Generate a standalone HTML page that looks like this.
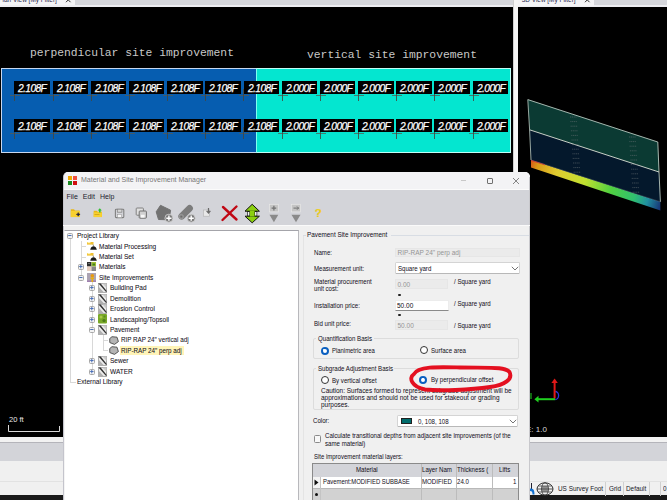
<!DOCTYPE html>
<html><head><meta charset="utf-8">
<style>
*{margin:0;padding:0;box-sizing:border-box}
html,body{width:667px;height:500px;overflow:hidden;background:#000;position:relative;font-family:"Liberation Sans",sans-serif}
.a{position:absolute}
.t{position:absolute;white-space:nowrap;line-height:1}
.mono{font-family:"Liberation Mono",monospace}
.lbl{position:absolute;background:#000;width:35.6px;height:13.2px}
.lbl span{position:absolute;left:4px;top:1px;color:#fff;font-style:italic;font-size:11px;letter-spacing:-0.65px;line-height:12px;-webkit-text-stroke:0.25px #fff;transform:scaleX(0.93);transform-origin:0 0}
.ch{position:absolute;width:11px;height:12px}
.ch:before{content:"";position:absolute;left:0.5px;top:6px;width:10px;height:1px;background:rgba(90,90,80,0.75)}
.ch:after{content:"";position:absolute;left:5px;top:0;width:1px;height:12px;background:rgba(70,70,62,0.85)}
.ui{color:#1c1c2c;font-size:6.5px}
.tx{color:#141022;-webkit-text-stroke:0.05px #141022;transform:scaleX(0.965);transform-origin:0 0}
</style></head><body>
<!-- top tab bar -->
<div class="a" style="left:0;top:0;width:667px;height:7px;background:#d6d7dc"></div>
<div class="a" style="left:0;top:0;width:75px;height:6px;background:#f4f4f6"></div>
<div class="a" style="left:0;top:5px;width:667px;height:2px;background:#eeeef2"></div>
<div class="a" style="left:518px;top:0;width:76px;height:6px;background:#f4f4f6"></div>
<div class="t" style="left:-1.7px;top:-2.8px;font-size:6.45px;color:#2a2a50">Plan View [My Filter]</div>
<svg class="a" style="left:65px;top:0" width="7" height="5" viewBox="0 0 7 5"><path d="M1 -2.5L5.5 2.2M5.5 -2.5L1 2.2" stroke="#303030" stroke-width="1"/></svg>
<div class="t" style="left:521.7px;top:-2.8px;font-size:6.45px;color:#2a2a50">3D View [My Filter]</div>
<svg class="a" style="left:584px;top:0" width="7" height="5" viewBox="0 0 7 5"><path d="M1 -2.5L5.5 2.2M5.5 -2.5L1 2.2" stroke="#303030" stroke-width="1"/></svg>
<!-- separator -->
<div class="a" style="left:513px;top:0;width:5px;height:437px;background:#f6f6f6;border-left:1px solid #d0d0d0"></div>

<!-- plan view labels -->
<div class="t mono" style="left:30px;top:48px;font-size:11.33px;color:#c8c8c8">perpendicular site improvement</div>
<div class="t mono" style="left:307px;top:50.3px;font-size:11.33px;color:#c8c8c8">vertical site improvement</div>

<!-- blue/cyan rect -->
<div class="a" style="left:1px;top:68px;width:255px;height:85px;background:#065db0;border:1px solid #c8d8f0;border-right:none"></div>
<div class="a" style="left:256px;top:68px;width:255px;height:85px;background:#04e6d0;border:1px solid #c0fff8;border-left:1px solid #80fff0"></div>

<div class="ch" style="left:9px;top:89px"></div><div class="ch" style="left:48px;top:89px"></div><div class="ch" style="left:86px;top:89px"></div><div class="ch" style="left:124px;top:89px"></div><div class="ch" style="left:162px;top:89px"></div><div class="ch" style="left:200px;top:89px"></div><div class="ch" style="left:238px;top:89px"></div><div class="ch" style="left:277px;top:89px"></div><div class="ch" style="left:315px;top:89px"></div><div class="ch" style="left:353px;top:89px"></div><div class="ch" style="left:391px;top:89px"></div><div class="ch" style="left:429px;top:89px"></div><div class="ch" style="left:468px;top:89px"></div><div class="ch" style="left:9px;top:127px"></div><div class="ch" style="left:48px;top:127px"></div><div class="ch" style="left:86px;top:127px"></div><div class="ch" style="left:124px;top:127px"></div><div class="ch" style="left:162px;top:127px"></div><div class="ch" style="left:200px;top:127px"></div><div class="ch" style="left:238px;top:127px"></div><div class="ch" style="left:277px;top:127px"></div><div class="ch" style="left:315px;top:127px"></div><div class="ch" style="left:353px;top:127px"></div><div class="ch" style="left:391px;top:127px"></div><div class="ch" style="left:429px;top:127px"></div><div class="ch" style="left:468px;top:127px"></div><div class="lbl" style="left:14.4px;top:81.3px"><span>2.108F</span></div><div class="lbl" style="left:52.6px;top:81.3px"><span>2.108F</span></div><div class="lbl" style="left:90.8px;top:81.3px"><span>2.108F</span></div><div class="lbl" style="left:128.9px;top:81.3px"><span>2.108F</span></div><div class="lbl" style="left:167.1px;top:81.3px"><span>2.108F</span></div><div class="lbl" style="left:205.3px;top:81.3px"><span>2.108F</span></div><div class="lbl" style="left:243.5px;top:81.3px"><span>2.108F</span></div><div class="lbl" style="left:281.7px;top:81.3px"><span>2.000F</span></div><div class="lbl" style="left:319.8px;top:81.3px"><span>2.000F</span></div><div class="lbl" style="left:358.0px;top:81.3px"><span>2.000F</span></div><div class="lbl" style="left:396.2px;top:81.3px"><span>2.000F</span></div><div class="lbl" style="left:434.4px;top:81.3px"><span>2.000F</span></div><div class="lbl" style="left:472.6px;top:81.3px"><span>2.000F</span></div><div class="lbl" style="left:14.4px;top:119.2px"><span>2.108F</span></div><div class="lbl" style="left:52.6px;top:119.2px"><span>2.108F</span></div><div class="lbl" style="left:90.8px;top:119.2px"><span>2.108F</span></div><div class="lbl" style="left:128.9px;top:119.2px"><span>2.108F</span></div><div class="lbl" style="left:167.1px;top:119.2px"><span>2.108F</span></div><div class="lbl" style="left:205.3px;top:119.2px"><span>2.108F</span></div><div class="lbl" style="left:243.5px;top:119.2px"><span>2.108F</span></div><div class="lbl" style="left:281.7px;top:119.2px"><span>2.000F</span></div><div class="lbl" style="left:319.8px;top:119.2px"><span>2.000F</span></div><div class="lbl" style="left:358.0px;top:119.2px"><span>2.000F</span></div><div class="lbl" style="left:396.2px;top:119.2px"><span>2.000F</span></div><div class="lbl" style="left:434.4px;top:119.2px"><span>2.000F</span></div><div class="lbl" style="left:472.6px;top:119.2px"><span>2.000F</span></div>

<!-- 3D view -->
<svg class="a" style="left:0;top:0" width="667" height="500" viewBox="0 0 667 500">
 <defs>
  <linearGradient id="rg" gradientUnits="userSpaceOnUse" x1="531" y1="164" x2="660" y2="206">
   <stop offset="0" stop-color="#d86018"/>
   <stop offset="0.05" stop-color="#d89a18"/>
   <stop offset="0.2" stop-color="#e0cc30"/>
   <stop offset="0.42" stop-color="#c0e030"/>
   <stop offset="0.62" stop-color="#50d040"/>
   <stop offset="0.8" stop-color="#30c070"/>
   <stop offset="0.9" stop-color="#2090a0"/>
   <stop offset="1" stop-color="#183878"/>
  </linearGradient>
 </defs>
 <polygon points="531,160 660.4,201.8 660.4,210.6 531,167.5" fill="url(#rg)"/>
 <polygon points="529.6,129.8 659,172 660.4,201.8 531,160" fill="#04182c"/>
 <line x1="531" y1="160.3" x2="545" y2="164.8" stroke="#e02020" stroke-width="0.9"/>
 <polygon points="527.8,99.6 657.8,142 659,172 529.6,129.8" fill="#0b3a33"/>
 <polyline points="527.8,99.6 657.8,142 659,172 660.4,201.8" fill="none" stroke="#b8c8c0" stroke-width="0.9"/>
 <polyline points="527.8,99.6 529.6,129.8 531,160" fill="none" stroke="#a8b8b0" stroke-width="0.9"/>
 <line x1="529.6" y1="129.8" x2="659" y2="172" stroke="#c8d0c8" stroke-width="1"/>
 <line x1="531" y1="160" x2="660.4" y2="201.8" stroke="#8090a0" stroke-width="0.6" opacity="0.6"/>
 <g stroke="#667074" stroke-width="0.55" stroke-dasharray="1.2 0.6"><line x1="570.0" y1="117.0" x2="577.0" y2="117.0"/><line x1="570.3" y1="121.6" x2="577.3" y2="121.6"/><line x1="570.6" y1="126.2" x2="577.6" y2="126.2"/><line x1="570.9" y1="130.8" x2="577.9" y2="130.8"/><line x1="571.2" y1="135.4" x2="578.2" y2="135.4"/><line x1="571.5" y1="140.0" x2="578.5" y2="140.0"/><line x1="571.8" y1="144.6" x2="578.8" y2="144.6"/><line x1="572.1" y1="149.2" x2="579.1" y2="149.2"/><line x1="572.4" y1="153.8" x2="579.4" y2="153.8"/><line x1="572.7" y1="158.4" x2="579.7" y2="158.4"/><line x1="573.0" y1="163.0" x2="580.0" y2="163.0"/><line x1="573.3" y1="167.6" x2="580.3" y2="167.6"/><line x1="573.6" y1="172.2" x2="580.6" y2="172.2"/><line x1="629.0" y1="137.0" x2="636.0" y2="137.0"/><line x1="629.3" y1="141.6" x2="636.3" y2="141.6"/><line x1="629.6" y1="146.2" x2="636.6" y2="146.2"/><line x1="629.9" y1="150.8" x2="636.9" y2="150.8"/><line x1="630.2" y1="155.4" x2="637.2" y2="155.4"/><line x1="630.5" y1="160.0" x2="637.5" y2="160.0"/><line x1="630.8" y1="164.6" x2="637.8" y2="164.6"/><line x1="631.1" y1="169.2" x2="638.1" y2="169.2"/><line x1="631.4" y1="173.8" x2="638.4" y2="173.8"/><line x1="631.7" y1="178.4" x2="638.7" y2="178.4"/><line x1="632.0" y1="183.0" x2="639.0" y2="183.0"/><line x1="632.3" y1="187.6" x2="639.3" y2="187.6"/><line x1="632.6" y1="192.2" x2="639.6" y2="192.2"/></g>
 <!-- axis -->
 <path d="M555.2 391.5 A3.2 3.8 0 0 1 555.2 399.6" fill="none" stroke="#2838e0" stroke-width="1.3"/>
 <line x1="554.6" y1="398.5" x2="554.6" y2="382" stroke="#e01818" stroke-width="2"/>
 <polygon points="551.4,383 557.8,383 554.6,378.6" fill="#e01818"/>
 <line x1="555" y1="399.2" x2="538" y2="399.2" stroke="#20d020" stroke-width="2"/>
 <polygon points="538.5,395.8 538.5,402.6 534.4,399.2" fill="#20d020"/>
 <line x1="531" y1="393" x2="531" y2="399" stroke="#20d020" stroke-width="1"/>
 <!-- scale bar -->
 <polyline points="8.5,425 8.5,431.5 59.5,431.5 59.5,426" fill="none" stroke="#d8d8d8" stroke-width="1"/>
</svg>
<div class="t" style="left:9px;top:416px;font-size:7.5px;color:#e8e8e8">20 ft</div>
<div class="t" style="left:526px;top:426px;font-size:8px;color:#d8d8d8">E: 1.0</div>
<!-- bottom bars -->
<div class="a" style="left:0;top:437px;width:667px;height:5px;background:#f2f2f2"></div>
<div class="a" style="left:0;top:442px;width:667px;height:19px;background:#d3d4d9;border-top:1px solid #b4b4ba"></div>
<div class="a" style="left:0;top:461px;width:667px;height:20px;background:#f0f0f0"></div>
<div class="a" style="left:0;top:481px;width:667px;height:1px;background:#e2e2e2"></div>
<div class="a" style="left:0;top:482px;width:667px;height:13px;background:#f0f0f0"></div>
<div class="a" style="left:0;top:495px;width:667px;height:5px;background:#1a1a1a"></div>
<!-- status bar items -->
<div class="a" style="left:530.5px;top:482.5px;width:1.6px;height:6px;background:#202030"></div><svg class="a" style="left:530px;top:488px" width="5" height="7" viewBox="0 0 5 7"><path d="M0 0.5h1.5C3.5 0.5 4.5 2.5 4.5 6.5H2.5C2.5 4 2 3 0 3z" fill="#1070d0"/></svg>
<svg class="a" style="left:536px;top:482px" width="18" height="14" viewBox="0 0 18 14"><ellipse cx="9" cy="7" rx="8" ry="6.2" fill="none" stroke="#303030" stroke-width="1"/><ellipse cx="9" cy="7" rx="3.5" ry="6.2" fill="none" stroke="#303030" stroke-width="0.8"/><line x1="1" y1="7" x2="17" y2="7" stroke="#303030" stroke-width="0.8"/><line x1="2" y1="4" x2="16" y2="4" stroke="#303030" stroke-width="0.7"/><line x1="2" y1="10" x2="16" y2="10" stroke="#303030" stroke-width="0.7"/><rect x="6" y="4" width="6" height="6" fill="#505050" opacity="0.6"/></svg>
<div class="t" style="left:558px;top:484.8px;font-size:7.2px;color:#181828;transform:scaleX(0.89);transform-origin:0 0">US Survey Foot</div>
<div class="a" style="left:605px;top:482px;width:1px;height:14px;background:#d0d0d0"></div>
<div class="t" style="left:609px;top:484.8px;font-size:7.2px;color:#181828;transform:scaleX(0.89);transform-origin:0 0">Grid</div>
<div class="a" style="left:623px;top:482px;width:1px;height:14px;background:#d0d0d0"></div>
<div class="t" style="left:626px;top:484.8px;font-size:7.2px;color:#181828;transform:scaleX(0.89);transform-origin:0 0">Default</div>
<div class="a" style="left:648.5px;top:482px;width:1px;height:14px;background:#d0d0d0"></div>
<div class="a" style="left:660px;top:482px;width:1px;height:14px;background:#d0d0d0"></div>
<div class="t" style="left:663px;top:484.8px;font-size:7.2px;color:#181828;transform:scaleX(0.89);transform-origin:0 0">0</div>
<!-- dialog -->
<div class="a" style="left:63px;top:172px;width:467px;height:328px;background:#f0f0f0;border-radius:5px 5px 0 0;overflow:hidden;border-left:1px solid #c4c4cc">
 <div class="a" style="left:0;top:0;width:467px;height:17.5px;background:#f3f3f5"></div>
 <div class="a" style="left:0;top:17.3px;width:467px;height:0.8px;background:#fbfbfb"></div><div class="a" style="left:0;top:18px;width:467px;height:34.8px;background:#d3d4d9"></div>
</div>
<div class="a" style="left:529.3px;top:177px;width:1px;height:323px;background:#c8c8cc"></div>
<!-- title -->
<div class="a" style="left:68px;top:176px;width:4px;height:4px;background:#f0a800"></div>
<div class="a" style="left:73px;top:176px;width:4px;height:4px;background:#f05040"></div>
<div class="a" style="left:68px;top:181px;width:4px;height:4px;background:#1a8a20"></div>
<div class="a" style="left:73px;top:181px;width:4px;height:4px;background:#d01010"></div>
<div class="t" style="left:80.7px;top:176.3px;font-size:7.5px;color:#767676;transform:scaleX(0.935);transform-origin:0 0">Material and Site Improvement Manager</div>
<div class="a" style="left:461px;top:180px;width:5px;height:1px;background:#c8c8c8"></div>
<div class="a" style="left:486.5px;top:177.5px;width:6.5px;height:6px;border:1px solid #707070;border-radius:1px"></div>
<svg class="a" style="left:512px;top:176.5px" width="8" height="8" viewBox="0 0 8 8"><path d="M1 1L7 7M7 1L1 7" stroke="#6a6a6a" stroke-width="0.8"/></svg>
<!-- menu -->
<div class="t ui" style="left:66.5px;top:192.5px;font-size:7px">File</div>
<div class="t ui" style="left:82.8px;top:192.5px;font-size:7px">Edit</div>
<div class="t ui" style="left:100px;top:192.5px;font-size:7px">Help</div>
<!-- toolbar -->
<svg class="a" style="left:0;top:0" width="340" height="230" viewBox="0 0 340 230">
 <!-- 1 folder star -->
 <path d="M70.8 209.2h3.2l1 1.2h4.6v6.7h-8.8z" fill="#e8b818"/>
 <path d="M70.8 211h9.1v6.1h-9.1z" fill="#f8d030"/>
 <path d="M78.2 212.6l0.6 1.3 1.3 0.5-1.3 0.5-0.6 1.3-0.6-1.3-1.3-0.5 1.3-0.5z" fill="#202040" stroke="#202040" stroke-width="0.6"/>
 <!-- 2 folder green arrow -->
 <path d="M93.7 210.8h3l1 1h4.2v5.3h-8.2z" fill="#e8b818"/>
 <path d="M93.7 212.4h8.2v4.7h-8.2z" fill="#f8d030"/>
 <path d="M94.5 214.5h5" stroke="#c09010" stroke-width="0.6"/>
 <path d="M99.8 208.3l2 2.2h-1.2v2h-1.6v-2h-1.2z" fill="#30c030"/>
 <!-- 3 floppy -->
 <rect x="115.4" y="209.2" width="8.4" height="8.4" rx="0.8" fill="none" stroke="#808080" stroke-width="1.1"/>
 <rect x="117.3" y="209.2" width="4.6" height="3" fill="#d8d8d8" stroke="#808080" stroke-width="0.7"/>
 <rect x="117.6" y="214.4" width="4" height="3.2" fill="#f8f8f8" stroke="#909090" stroke-width="0.5"/>
 <!-- 4 double floppy -->
 <rect x="136.2" y="208" width="7.2" height="7.2" rx="0.8" fill="#e0e0e0" stroke="#808080" stroke-width="1"/>
 <rect x="139.2" y="211" width="7.2" height="7.2" rx="0.8" fill="#d0d0d0" stroke="#707070" stroke-width="1"/>
 <rect x="141" y="214.8" width="3.6" height="2.8" fill="#f8f8f8"/>
 <!-- 5 hexagon plus -->
 <polygon points="160.5,205.3 170.6,210.2 169,219.8 158.5,219.5 156.2,211.8" fill="#727272" stroke="#727272" stroke-width="1" stroke-linejoin="round"/>
 <circle cx="168.9" cy="218.2" r="4" fill="#7a7a7a" stroke="#d8d8d8" stroke-width="0.8"/>
 <path d="M166.3 218.2h5.2M168.9 215.6v5.2" stroke="#fff" stroke-width="1.4"/>
 <!-- 6 pipe plus -->
 <line x1="181.6" y1="216.3" x2="189.6" y2="208.3" stroke="#7c7c7c" stroke-width="6.6" stroke-linecap="round"/>
 <circle cx="181.3" cy="216.6" r="2.2" fill="#8a8a8a" stroke="#a0a0a0" stroke-width="0.7"/>
 <circle cx="181.3" cy="216.6" r="0.9" fill="#6a6a6a"/>
 <circle cx="191.2" cy="218.2" r="4" fill="#7a7a7a" stroke="#d8d8d8" stroke-width="0.8"/>
 <path d="M188.6 218.2h5.2M191.2 215.6v5.2" stroke="#fff" stroke-width="1.4"/>
 <!-- 7 doc arrow -->
 <rect x="203.3" y="210" width="6" height="6.2" fill="#e8e8e8" stroke="#b0b0b0" stroke-width="0.6"/>
 <path d="M208.5 208v4.5M206.6 210.8l1.9 2.2 1.9-2.2" fill="none" stroke="#6a6a6a" stroke-width="1.2"/>
 <!-- 8 red X -->
 <path d="M223 207L236.5 219.5M236.5 206.5L222.5 220" stroke="#c00814" stroke-width="2.4" stroke-linecap="round"/>
 <!-- 9 green double arrow -->
 <rect x="247.2" y="210.8" width="10" height="6.2" fill="#101010"/>
 <rect x="247.8" y="212" width="1.6" height="3.8" fill="#f0f0f0"/>
 <rect x="255" y="212" width="1.6" height="3.8" fill="#f0f0f0"/>
 <path d="M252.2 204.3L259.4 211.2H245z" fill="#8cd010" stroke="#101010" stroke-width="1" stroke-linejoin="round"/>
 <path d="M252.2 222.8L259.4 216.2H245z" fill="#8cd010" stroke="#101010" stroke-width="1" stroke-linejoin="round"/>
 <rect x="249.8" y="210.6" width="4.8" height="6" fill="#8cd010"/>
 <!-- 10 -->
 <rect x="269.5" y="204.3" width="8.8" height="7.6" fill="#c4c4c4" stroke="#e8e8e8" stroke-width="0.7"/>
 <path d="M273.9 205.8v4.6M271.6 208.1h4.6" stroke="#707070" stroke-width="1.2"/>
 <polygon points="269.5,214.8 278.3,214.8 273.9,222.3" fill="#8a8a8a"/>
 <!-- 11 -->
 <rect x="291.3" y="204.3" width="9.2" height="7.6" fill="#c4c4c4" stroke="#e8e8e8" stroke-width="0.7"/>
 <path d="M293.5 208.1h5M297 206.5l1.6 1.6-1.6 1.6" fill="none" stroke="#707070" stroke-width="1"/>
 <polygon points="291.5,214.8 300.5,214.8 296,222.3" fill="#8a8a8a"/>
</svg>
<div class="t" style="left:314.8px;top:207.5px;font-size:11.5px;font-weight:bold;color:#f2d020;-webkit-text-stroke:0.15px #d0a800">?</div>
<div class="a" style="left:63px;top:224.8px;width:467px;height:1px;background:#fafafa"></div>

<!-- tree -->
<div class="a" style="left:64px;top:230px;width:235px;height:270px;background:#fff;border:1px solid #a4a4aa;border-left-color:#f4f4f4;border-right-color:#b8b8bc;border-bottom:none"></div>
<div class="a" style="left:69.5px;top:239.2px;width:1px;height:143.0px;background:#d8d8d8"></div><div class="a" style="left:81.0px;top:240.7px;width:1px;height:36.7px;background:#d8d8d8"></div><div class="a" style="left:92.0px;top:280.4px;width:1px;height:91.4px;background:#d8d8d8"></div><div class="a" style="left:103.0px;top:334.6px;width:1px;height:16.4px;background:#d8d8d8"></div><div class="a" style="left:81.0px;top:246.1px;width:5.0px;height:1px;background:#d8d8d8"></div><div class="a" style="left:81.0px;top:256.6px;width:5.0px;height:1px;background:#d8d8d8"></div><div class="a" style="left:103.0px;top:340.0px;width:5.0px;height:1px;background:#d8d8d8"></div><div class="a" style="left:103.0px;top:350.4px;width:5.0px;height:1px;background:#d8d8d8"></div><div class="a" style="left:70.0px;top:381.7px;width:6.0px;height:1px;background:#d8d8d8"></div><svg class="a" style="left:67px;top:233px" width="6" height="6" viewBox="0 0 6 6"><rect x="0.5" y="0.5" width="5" height="5" rx="1" fill="#f2f2f2" stroke="#a8a8a8" stroke-width="1"/><path d="M1.2 2.5h3.3" stroke="#4a70b8" stroke-width="1"/></svg><div class="t tx" style="left:76.9px;top:233.1px;font-size:6.75px">Project Library</div><svg class="a" style="left:87px;top:241.3px" width="10" height="10" viewBox="0 0 10 10"><rect x="0" y="1" width="6.5" height="2.6" fill="#f0c030"/><rect x="0.5" y="1" width="3" height="1.2" fill="#fff4b0"/><line x1="6" y1="3.4" x2="6.8" y2="5.5" stroke="#505050" stroke-width="0.6"/><path d="M3.2 8.8 C3.8 5.8 5.2 5.2 6.5 5.2 C7.8 5.2 9.2 5.8 9.8 8.8Z" fill="#1a1a1a"/></svg><div class="t tx" style="left:98.6px;top:243.5px;font-size:6.75px">Material Processing</div><svg class="a" style="left:87px;top:251.8px" width="10" height="10" viewBox="0 0 10 10"><rect x="0" y="1" width="6.5" height="2.6" fill="#f0c030"/><rect x="0.5" y="1" width="3" height="1.2" fill="#fff4b0"/><line x1="6" y1="3.4" x2="6.8" y2="5.5" stroke="#505050" stroke-width="0.6"/><path d="M3.2 8.8 C3.8 5.8 5.2 5.2 6.5 5.2 C7.8 5.2 9.2 5.8 9.8 8.8Z" fill="#1a1a1a"/></svg><div class="t tx" style="left:98.6px;top:254.0px;font-size:6.75px">Material Set</div><svg class="a" style="left:78px;top:264px" width="6" height="6" viewBox="0 0 6 6"><rect x="0.5" y="0.5" width="5" height="5" rx="1" fill="#f2f2f2" stroke="#a8a8a8" stroke-width="1"/><path d="M1.2 2.5h3.3" stroke="#4a70b8" stroke-width="1"/><path d="M2.8 1v3.3" stroke="#4a70b8" stroke-width="1"/></svg><svg class="a" style="left:87px;top:262.2px" width="10" height="10" viewBox="0 0 10 10"><rect x="0" y="0" width="4.5" height="4.5" fill="#303030"/><rect x="4.5" y="0" width="4.5" height="4.5" fill="#a0c030"/><rect x="5.5" y="1.5" width="2.5" height="2" fill="#408020"/><rect x="0" y="4.5" width="4.5" height="4.5" fill="#e8d0c0"/><rect x="4.5" y="4.5" width="4.5" height="4.5" fill="#888"/><rect x="1" y="1" width="2" height="1" fill="#707070"/></svg><div class="t tx" style="left:98.6px;top:264.4px;font-size:6.75px">Materials</div><svg class="a" style="left:78px;top:275px" width="6" height="6" viewBox="0 0 6 6"><rect x="0.5" y="0.5" width="5" height="5" rx="1" fill="#f2f2f2" stroke="#a8a8a8" stroke-width="1"/><path d="M1.2 2.5h3.3" stroke="#4a70b8" stroke-width="1"/></svg><svg class="a" style="left:87px;top:272.6px" width="10" height="10" viewBox="0 0 10 10"><rect x="0" y="0" width="9" height="9" fill="#aca4b4"/><rect x="0" y="7.5" width="9" height="1.5" fill="#a080b0"/><circle cx="5.3" cy="2.8" r="1.8" fill="#e89a10"/><path d="M3.5 4.5h3.6v1.5h-1v3h-1.6v-3h-1z" fill="#e8b010"/></svg><div class="t tx" style="left:98.6px;top:274.8px;font-size:6.75px">Site Improvements</div><svg class="a" style="left:89px;top:285px" width="6" height="6" viewBox="0 0 6 6"><rect x="0.5" y="0.5" width="5" height="5" rx="1" fill="#f2f2f2" stroke="#a8a8a8" stroke-width="1"/><path d="M1.2 2.5h3.3" stroke="#4a70b8" stroke-width="1"/><path d="M2.8 1v3.3" stroke="#4a70b8" stroke-width="1"/></svg><svg class="a" style="left:98px;top:283.0px" width="9" height="10" viewBox="0 0 9 10"><rect x="0.4" y="0.4" width="8.2" height="9.2" fill="#ececec" stroke="#909090" stroke-width="0.7"/><path d="M0.5 0.5h2.2L8.5 7.8v1.8z" fill="#303030"/><path d="M4.5 0.5h4v4.5z" fill="#c8c8c8"/><path d="M0.5 3.5L6 9.5H0.5z" fill="#b0b0b0"/></svg><div class="t tx" style="left:109.8px;top:285.2px;font-size:6.75px">Building Pad</div><svg class="a" style="left:89px;top:296px" width="6" height="6" viewBox="0 0 6 6"><rect x="0.5" y="0.5" width="5" height="5" rx="1" fill="#f2f2f2" stroke="#a8a8a8" stroke-width="1"/><path d="M1.2 2.5h3.3" stroke="#4a70b8" stroke-width="1"/><path d="M2.8 1v3.3" stroke="#4a70b8" stroke-width="1"/></svg><svg class="a" style="left:98px;top:293.5px" width="9" height="10" viewBox="0 0 9 10"><rect x="0.4" y="0.4" width="8.2" height="9.2" fill="#ececec" stroke="#909090" stroke-width="0.7"/><path d="M0.5 0.5h2.2L8.5 7.8v1.8z" fill="#303030"/><path d="M4.5 0.5h4v4.5z" fill="#c8c8c8"/><path d="M0.5 3.5L6 9.5H0.5z" fill="#b0b0b0"/></svg><div class="t tx" style="left:109.8px;top:295.7px;font-size:6.75px">Demolition</div><svg class="a" style="left:89px;top:306px" width="6" height="6" viewBox="0 0 6 6"><rect x="0.5" y="0.5" width="5" height="5" rx="1" fill="#f2f2f2" stroke="#a8a8a8" stroke-width="1"/><path d="M1.2 2.5h3.3" stroke="#4a70b8" stroke-width="1"/><path d="M2.8 1v3.3" stroke="#4a70b8" stroke-width="1"/></svg><svg class="a" style="left:98px;top:303.9px" width="9" height="10" viewBox="0 0 9 10"><rect x="0.4" y="0.4" width="8.2" height="9.2" fill="#ececec" stroke="#909090" stroke-width="0.7"/><path d="M0.5 0.5h2.2L8.5 7.8v1.8z" fill="#303030"/><path d="M4.5 0.5h4v4.5z" fill="#c8c8c8"/><path d="M0.5 3.5L6 9.5H0.5z" fill="#b0b0b0"/></svg><div class="t tx" style="left:109.8px;top:306.1px;font-size:6.75px">Erosion Control</div><svg class="a" style="left:89px;top:317px" width="6" height="6" viewBox="0 0 6 6"><rect x="0.5" y="0.5" width="5" height="5" rx="1" fill="#f2f2f2" stroke="#a8a8a8" stroke-width="1"/><path d="M1.2 2.5h3.3" stroke="#4a70b8" stroke-width="1"/><path d="M2.8 1v3.3" stroke="#4a70b8" stroke-width="1"/></svg><svg class="a" style="left:98px;top:314.3px" width="9" height="10" viewBox="0 0 9 10"><rect x="0" y="0" width="9" height="9.5" rx="1" fill="#78a828"/><circle cx="3" cy="3" r="1.5" fill="#a8c848"/><circle cx="6" cy="6.5" r="1.6" fill="#4a7a18"/><circle cx="6.5" cy="2.5" r="1" fill="#5a8a20"/></svg><div class="t tx" style="left:109.8px;top:316.5px;font-size:6.75px">Landscaping/Topsoil</div><svg class="a" style="left:89px;top:327px" width="6" height="6" viewBox="0 0 6 6"><rect x="0.5" y="0.5" width="5" height="5" rx="1" fill="#f2f2f2" stroke="#a8a8a8" stroke-width="1"/><path d="M1.2 2.5h3.3" stroke="#4a70b8" stroke-width="1"/></svg><svg class="a" style="left:98px;top:324.8px" width="9" height="10" viewBox="0 0 9 10"><rect x="0.4" y="0.4" width="8.2" height="9.2" fill="#ececec" stroke="#909090" stroke-width="0.7"/><path d="M0.5 0.5h2.2L8.5 7.8v1.8z" fill="#303030"/><path d="M4.5 0.5h4v4.5z" fill="#c8c8c8"/><path d="M0.5 3.5L6 9.5H0.5z" fill="#b0b0b0"/></svg><div class="t tx" style="left:109.8px;top:327.0px;font-size:6.75px">Pavement</div><svg class="a" style="left:108.6px;top:335.8px" width="10" height="9" viewBox="0 0 10 9"><polygon points="3,0.7 8,1.2 9.4,5.6 5.5,8.4 0.8,6.6 0.7,2.6" fill="#b4b4b4" stroke="#484848" stroke-width="0.9"/></svg><div class="t tx" style="left:120.8px;top:337.4px;font-size:6.5px">RIP RAP 24&quot; vertical adj</div><svg class="a" style="left:108.6px;top:346.2px" width="10" height="9" viewBox="0 0 10 9"><polygon points="3,0.7 8,1.2 9.4,5.6 5.5,8.4 0.8,6.6 0.7,2.6" fill="#b4b4b4" stroke="#484848" stroke-width="0.9"/></svg><div class="a" style="left:119.8px;top:346.1px;width:64px;height:9.2px;background:#fff4b8"></div><div class="t tx" style="left:120.8px;top:347.8px;font-size:6.5px">RIP-RAP 24&quot; perp adj</div><svg class="a" style="left:89px;top:358px" width="6" height="6" viewBox="0 0 6 6"><rect x="0.5" y="0.5" width="5" height="5" rx="1" fill="#f2f2f2" stroke="#a8a8a8" stroke-width="1"/><path d="M1.2 2.5h3.3" stroke="#4a70b8" stroke-width="1"/><path d="M2.8 1v3.3" stroke="#4a70b8" stroke-width="1"/></svg><svg class="a" style="left:98px;top:356.1px" width="9" height="10" viewBox="0 0 9 10"><rect x="0.4" y="0.4" width="8.2" height="9.2" fill="#ececec" stroke="#909090" stroke-width="0.7"/><path d="M0.5 0.5h2.2L8.5 7.8v1.8z" fill="#303030"/><path d="M4.5 0.5h4v4.5z" fill="#c8c8c8"/><path d="M0.5 3.5L6 9.5H0.5z" fill="#b0b0b0"/></svg><div class="t tx" style="left:109.8px;top:358.3px;font-size:6.75px">Sewer</div><svg class="a" style="left:89px;top:369px" width="6" height="6" viewBox="0 0 6 6"><rect x="0.5" y="0.5" width="5" height="5" rx="1" fill="#f2f2f2" stroke="#a8a8a8" stroke-width="1"/><path d="M1.2 2.5h3.3" stroke="#4a70b8" stroke-width="1"/><path d="M2.8 1v3.3" stroke="#4a70b8" stroke-width="1"/></svg><svg class="a" style="left:98px;top:366.5px" width="9" height="10" viewBox="0 0 9 10"><rect x="0.4" y="0.4" width="8.2" height="9.2" fill="#ececec" stroke="#909090" stroke-width="0.7"/><path d="M0.5 0.5h2.2L8.5 7.8v1.8z" fill="#303030"/><path d="M4.5 0.5h4v4.5z" fill="#c8c8c8"/><path d="M0.5 3.5L6 9.5H0.5z" fill="#b0b0b0"/></svg><div class="t tx" style="left:109.8px;top:368.7px;font-size:6.75px">WATER</div><div class="t tx" style="left:76.9px;top:379.1px;font-size:6.75px">External Library</div>
<!-- right panel -->
<style>
.rp{position:absolute;white-space:nowrap;line-height:1;font-size:6.5px;transform:scaleX(0.94);transform-origin:0 0;color:#120e20;margin-top:0.5px;-webkit-text-stroke:0.02px #120e20}
.rp.gr{color:#959595;-webkit-text-stroke:0;transform:none}
.fld{position:absolute;background:#ebebeb;border:1px solid #e6e6e6}
.gb{position:absolute;border:1px solid #dcdcdc;border-radius:2px}
.radio{position:absolute;width:8px;height:8px;border-radius:50%;border:1px solid #333;background:#fff}
.radio.on{border:2.6px solid #0a5fc0}
.radio.on:after{content:"";position:absolute;left:0.4px;top:0.4px;width:2px;height:2px;border-radius:50%;background:#fff}
</style>
<!-- group box -->
<div class="a" style="left:303px;top:235px;width:3px;height:1px;background:#d8dde4"></div>
<div class="a" style="left:391px;top:235px;width:138px;height:1px;background:#d8dde4"></div>
<div class="a" style="left:302.5px;top:235.5px;width:1px;height:265px;background:#e4e4e4"></div>
<div class="rp" style="left:306.7px;top:231.2px;transform:scaleX(0.98)">Pavement Site Improvement</div>
<!-- labels -->
<div class="rp" style="left:313.9px;top:249px">Name:</div>
<div class="rp" style="left:313.9px;top:265px;transform:scaleX(0.93)">Measurement unit:</div>
<div class="rp" style="left:313.9px;top:278px">Material procurement</div>
<div class="rp" style="left:313.9px;top:285.3px">unit cost:</div>
<div class="rp" style="left:313.9px;top:302.6px">Installation price:</div>
<div class="rp" style="left:313.9px;top:320.6px">Bid unit price:</div>
<!-- fields -->
<div class="fld" style="left:395.4px;top:247.6px;width:124.4px;height:9.8px"></div>
<div class="rp gr" style="left:397.5px;top:249.2px">RIP-RAP 24" perp adj</div>
<div class="a" style="left:395.4px;top:262.4px;width:124.8px;height:11.6px;background:#fff;border:1px solid #d4d4d4;border-bottom-color:#b8b8b8;border-radius:1.5px"></div>
<div class="rp" style="left:397.5px;top:265px">Square yard</div>
<svg class="a" style="left:511px;top:266px" width="8" height="5" viewBox="0 0 8 5"><path d="M0.8 0.8L4 4 7.2 0.8" fill="none" stroke="#505050" stroke-width="0.8"/></svg>
<div class="fld" style="left:395.4px;top:279px;width:53.1px;height:10px"></div>
<div class="rp gr" style="left:397.5px;top:281.2px">0.00</div>
<div class="rp" style="left:453.5px;top:278.5px">/ Square yard</div>
<div class="a" style="left:398.4px;top:294px;width:2.3px;height:2.3px;border-radius:50%;background:#202020"></div>
<div class="a" style="left:395.4px;top:299.6px;width:53.6px;height:11px;background:#fff;border:1px solid #ececec;border-bottom:1px solid #8a8a8a"></div>
<div class="rp" style="left:397px;top:302.3px;transform:none">50.00</div>
<div class="rp" style="left:453.5px;top:300.2px">/ Square yard</div>
<div class="a" style="left:398.4px;top:314.2px;width:2.3px;height:2.3px;border-radius:50%;background:#202020"></div>
<div class="fld" style="left:395.4px;top:320.4px;width:53px;height:9.6px"></div>
<div class="rp gr" style="left:397.5px;top:322.3px">50.00</div>
<div class="rp" style="left:453.5px;top:322.1px">/ Square yard</div>
<!-- quantification -->
<div class="gb" style="left:313px;top:338px;width:206.3px;height:21px"></div>
<div class="a" style="left:316px;top:336px;width:58px;height:4px;background:#f0f0f0"></div>
<div class="rp" style="left:318px;top:335.2px">Quantification Basis</div>
<div class="radio on" style="left:321px;top:346.5px"></div>
<div class="rp" style="left:332.3px;top:347.5px;transform:scaleX(0.91)">Planimetric area</div>
<div class="radio" style="left:420px;top:346.2px"></div>
<div class="rp" style="left:431px;top:347.3px">Surface area</div>
<!-- subgrade -->
<div class="gb" style="left:313px;top:368px;width:206.3px;height:42.4px"></div>
<div class="a" style="left:316px;top:366px;width:78px;height:4px;background:#f0f0f0"></div>
<div class="rp" style="left:318px;top:365.2px">Subgrade Adjustment Basis</div>
<div class="radio" style="left:320.6px;top:376.2px"></div>
<div class="rp" style="left:331.6px;top:377.2px">By vertical offset</div>
<div class="radio on" style="left:419.2px;top:375.9px"></div>
<div class="rp" style="left:431px;top:376.9px">By perpendicular offset</div>
<div class="rp" style="left:321.2px;top:387.2px;transform:scaleX(0.99)">Caution: Surfaces formed to represent subgrade adjustment will be</div>
<div class="rp" style="left:321.2px;top:394.7px;transform:scaleX(0.99)">approximations and should not be used for stakeout or grading</div>
<div class="rp" style="left:321.2px;top:401.8px;transform:scaleX(0.99)">purposes.</div>
<!-- red ellipse -->
<svg class="a" style="left:405px;top:360px" width="112" height="34" viewBox="0 0 112 34">
<path d="M9 14 C13 6, 35 7, 55 7.5 C85 8, 100 6.5, 104.5 12 C108 19, 100 25, 85 27 C65 30, 35 31, 20 29.5 C7 27, 3 18, 9 14 Z" fill="none" stroke="#e41020" stroke-width="3.9" stroke-linecap="round"/>
</svg>
<!-- color -->
<div class="rp" style="left:313.4px;top:417.7px">Color:</div>
<div class="a" style="left:396.8px;top:415.4px;width:121.4px;height:11.8px;background:#fff;border:1px solid #d4d4d4;border-bottom-color:#b8b8b8;border-radius:1.5px"></div>
<div class="a" style="left:400.5px;top:417.7px;width:11.8px;height:6.5px;background:#006c6c;border:1px solid #202020"></div>
<div class="rp" style="left:418px;top:418.3px">0, 108, 108</div>
<svg class="a" style="left:508.5px;top:419px" width="8" height="5" viewBox="0 0 8 5"><path d="M0.8 0.8L4 4 7.2 0.8" fill="none" stroke="#505050" stroke-width="0.8"/></svg>
<!-- checkbox -->
<div class="a" style="left:313.6px;top:435.3px;width:7.8px;height:7.8px;border:1px solid #8a8a8a;border-radius:1.5px;background:#f8f8f8"></div>
<div class="rp" style="left:324.5px;top:432.9px">Calculate transitional depths from adjacent site improvements (of the</div>
<div class="rp" style="left:324.5px;top:440.2px">same material)</div>
<div class="rp" style="left:313.6px;top:453.8px;transform:scaleX(0.92)">Site improvement material layers:</div>
<!-- grid -->
<div class="a" style="left:312.2px;top:462.6px;width:206.7px;height:40px;background:#d2d2d2;border:1px solid #8a8a8a"></div>
<div class="a" style="left:313.2px;top:463.6px;width:204.7px;height:13px;background:#d3d4d9"></div>
<div class="a" style="left:313.2px;top:476.5px;width:7px;height:11.5px;background:#f4f4f4"></div>
<div class="a" style="left:320.2px;top:476.5px;width:197.7px;height:11.5px;background:#fff"></div>
<div class="a" style="left:313.2px;top:488px;width:204.7px;height:1px;background:#b8b8b8"></div>
<div class="a" style="left:320.2px;top:476.5px;width:1px;height:24px;background:#c4c4c4"></div>
<div class="a" style="left:420.5px;top:463.6px;width:1px;height:37px;background:#bcbcbc"></div>
<div class="a" style="left:455.6px;top:463.6px;width:1px;height:37px;background:#bcbcbc"></div>
<div class="a" style="left:491.6px;top:463.6px;width:1px;height:37px;background:#bcbcbc"></div>
<div class="rp" style="left:356px;top:466.2px">Material</div>
<div class="rp" style="left:422.4px;top:466.2px">Layer Nam</div>
<div class="rp" style="left:457px;top:466.2px">Thickness (</div>
<div class="rp" style="left:499px;top:466.2px">Lifts</div>
<svg class="a" style="left:314px;top:479px" width="5" height="7" viewBox="0 0 5 7"><path d="M0.5 0.5L4.5 3.5 0.5 6.5z" fill="#101010"/></svg>
<div class="rp" style="left:322.8px;top:478.5px;transform:scaleX(0.91)">Pavement:MODIFIED SUBBASE</div>
<div class="rp" style="left:422.4px;top:478.5px">MODIFIED</div>
<div class="rp" style="left:457px;top:478.5px">24.0</div>
<div class="rp" style="left:512.5px;top:478.5px">1</div>
<div class="a" style="left:314.5px;top:492.5px;width:3.5px;height:3.5px;border-radius:50%;background:#101010"></div>

</body></html>
